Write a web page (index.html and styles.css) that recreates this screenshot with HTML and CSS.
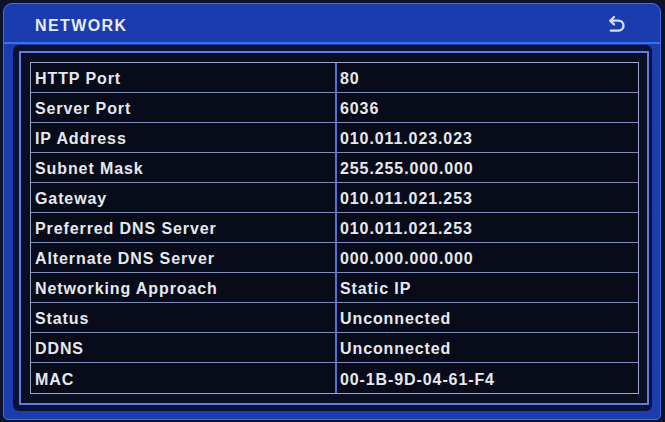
FILE: index.html
```html
<!DOCTYPE html>
<html>
<head>
<meta charset="utf-8">
<title>NETWORK</title>
<link rel="stylesheet" href="styles.css">
</head>
<body>
<div class="window">
  <div class="titlebar">
    <span class="title">NETWORK</span>
    <svg class="back" width="20" height="22" viewBox="0 0 20 22" aria-label="back">
      <path d="M7 2 L3.3 5.7 L7 9.4" fill="none" stroke="#d6dcf2" stroke-width="2.3" stroke-linecap="round" stroke-linejoin="round"/>
      <path d="M3.8 5.7 H11.5 A5 5 0 0 1 11.5 15.7 H3.8" fill="none" stroke="#d6dcf2" stroke-width="2.3" stroke-linecap="round"/>
    </svg>
  </div>
  <div class="sep"></div>
  <div class="body">
    <div class="panel">
      <div class="frame">
        <div class="grid">
          <div class="cell label">HTTP Port</div><div class="cell value">80</div>
          <div class="cell label">Server Port</div><div class="cell value">6036</div>
          <div class="cell label">IP Address</div><div class="cell value">010.011.023.023</div>
          <div class="cell label">Subnet Mask</div><div class="cell value">255.255.000.000</div>
          <div class="cell label">Gateway</div><div class="cell value">010.011.021.253</div>
          <div class="cell label">Preferred DNS Server</div><div class="cell value">010.011.021.253</div>
          <div class="cell label">Alternate DNS Server</div><div class="cell value">000.000.000.000</div>
          <div class="cell label">Networking Approach</div><div class="cell value">Static IP</div>
          <div class="cell label">Status</div><div class="cell value">Unconnected</div>
          <div class="cell label">DDNS</div><div class="cell value">Unconnected</div>
          <div class="cell label last">MAC</div><div class="cell value last">00-1B-9D-04-61-F4</div>
        </div>
      </div>
    </div>
  </div>
</div>
</body>
</html>
```
FILE: styles.css
```css
html, body {
  margin: 0;
  padding: 0;
}
body {
  background: #0c1328;
  width: 665px;
  height: 422px;
  overflow: hidden;
  font-family: "Liberation Sans", Arial, sans-serif;
}
.window {
  box-sizing: border-box;
  margin: 3px 4px 0 3px;
  height: 417px;
  border: 1px solid #4470dc;
  border-radius: 9px 9px 5px 5px;
  background: #1b3cae;
  display: flex;
  flex-direction: column;
}
.titlebar {
  height: 39px;
  display: flex;
  align-items: center;
  justify-content: space-between;
  padding: 0 33px 0 31px;
}
.title {
  color: #e8eaf2;
  font-weight: bold;
  font-size: 16px;
  letter-spacing: 1.4px;
  margin-top: 5px;
}
.back {
  margin-top: 6px;
}
.sep {
  height: 2px;
  background: #3b70ea;
}
.body {
  flex: 1;
  display: flex;
  padding: 1px 8px 8px 9px;
}
.panel {
  flex: 1;
  display: flex;
  background: #0b1234;
  border-radius: 6px;
  padding: 6px 3px 6px 6px;
}
.frame {
  flex: 1;
  border: 2px solid #5e7ee6;
  padding: 9px 8px 9px 9px;
  background: #0a0f24;
}
.grid {
  display: grid;
  grid-template-columns: 304px 1fr;
  grid-auto-rows: 30px;
  border: 1px solid #9aa5cc;
  background: #080c1a;
}
.cell {
  box-sizing: border-box;
  border-bottom: 1px solid #7e8bb8;
  display: flex;
  align-items: center;
  padding-top: 3px;
  color: #e6e8ee;
  font-weight: bold;
  font-size: 16px;
  letter-spacing: 0.9px;
  white-space: nowrap;
}
.cell.last {
  border-bottom: none;
}
.label {
  padding-left: 4px;
}
.value {
  border-left: 2px solid #5670d8;
  padding-left: 3px;
}
```
